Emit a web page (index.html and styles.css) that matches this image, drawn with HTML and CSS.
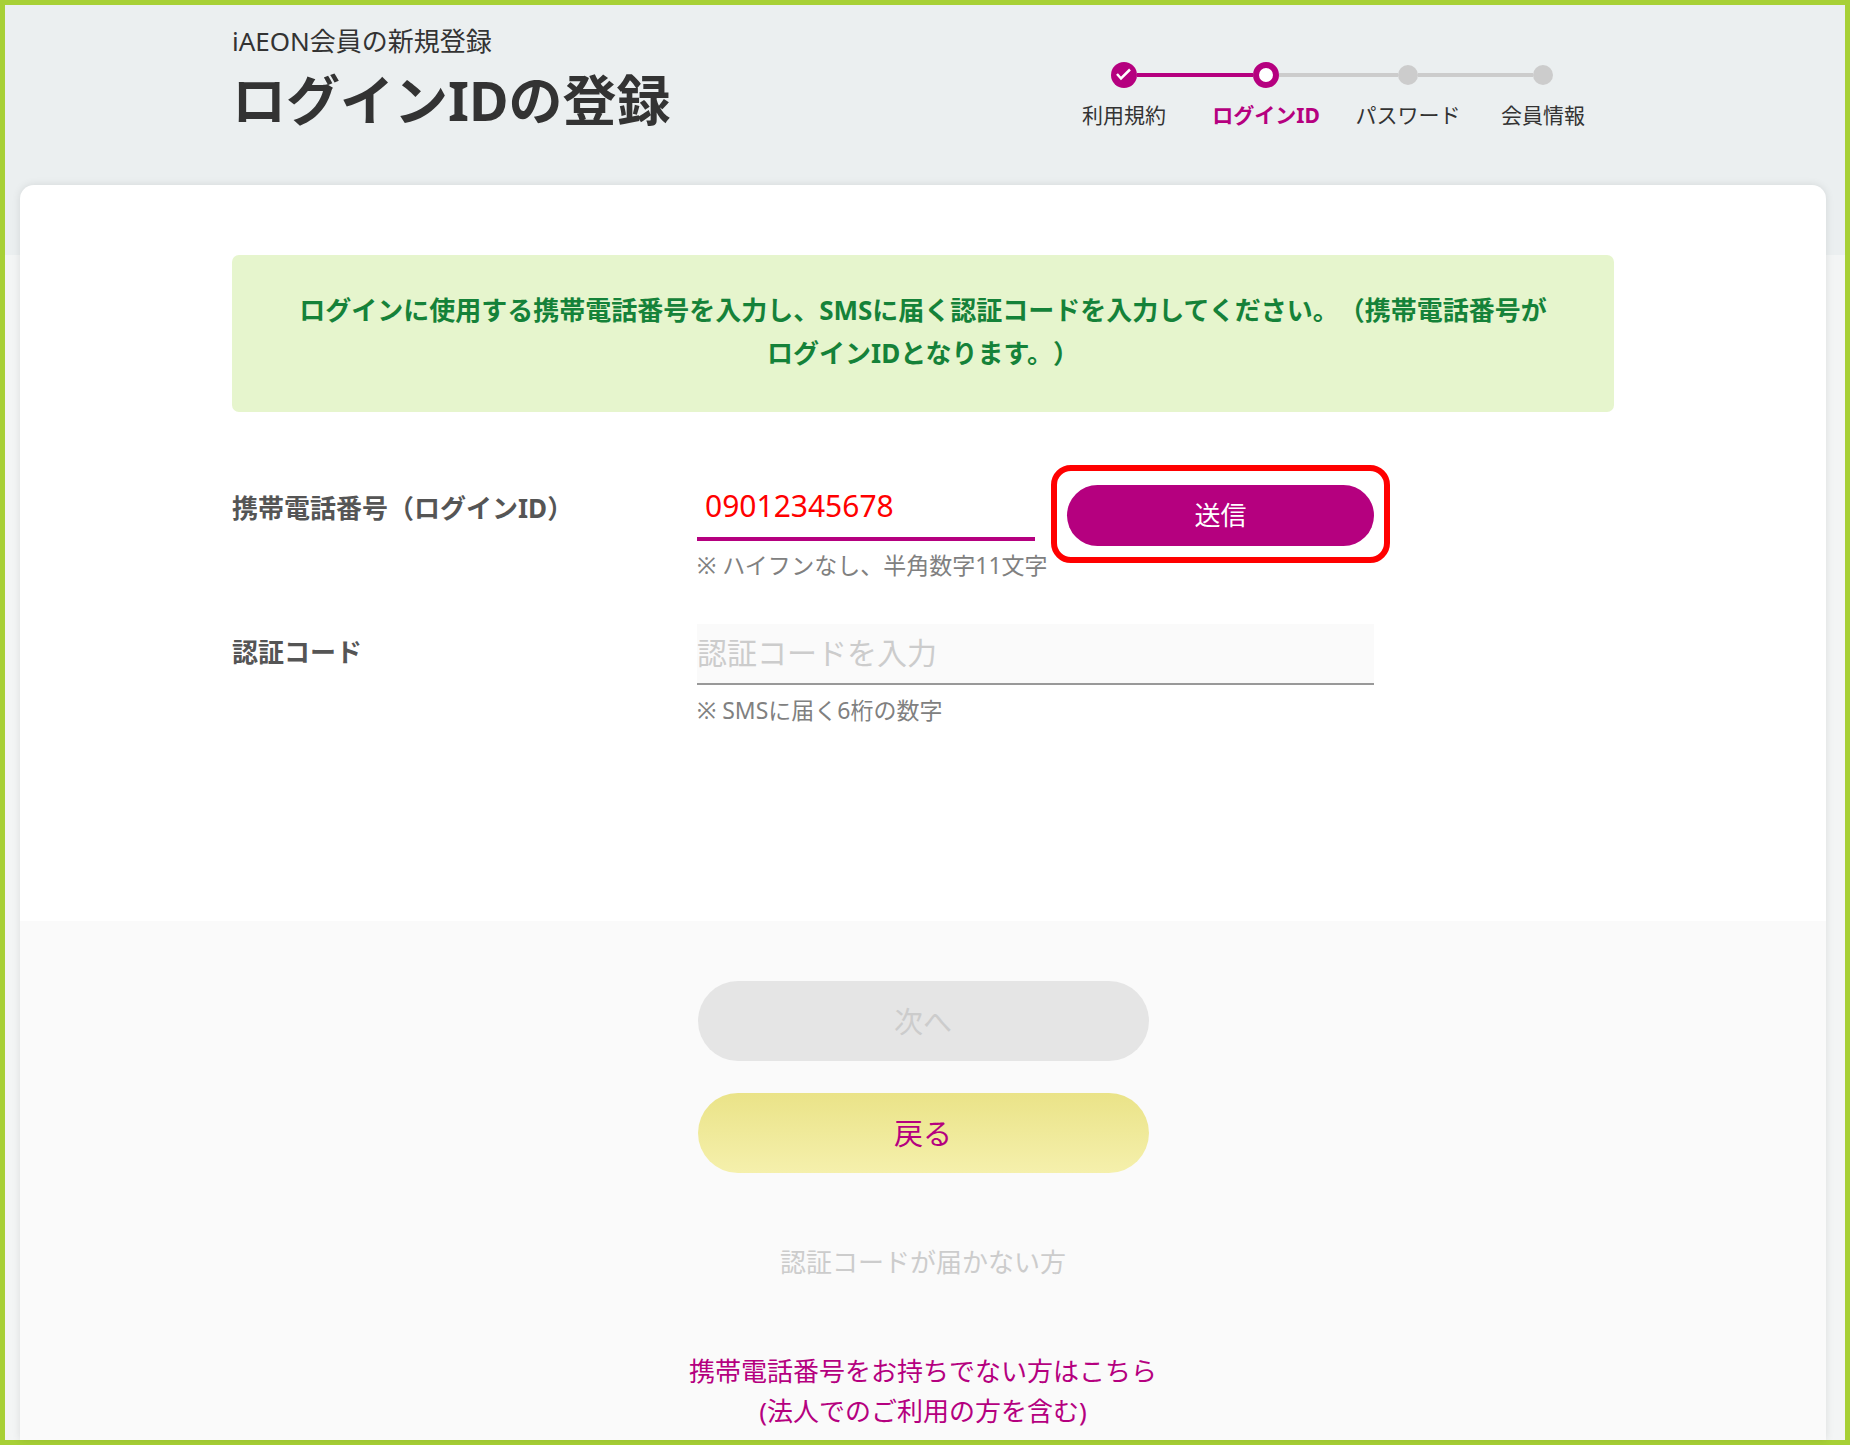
FILE: index.html
```html
<!DOCTYPE html>
<html lang="ja">
<head>
  <meta charset="UTF-8">
  <meta name="viewport" content="width=device-width, initial-scale=1.0">
  <title>ログインIDの登録</title>
  <link rel="stylesheet" href="styles.css">
</head>
<body>
  <div class="page">
    <header class="header">
      <div class="header-title">
        <p class="subtitle">iAEON会員の新規登録</p>
        <h1>ログインIDの登録</h1>
      </div>
      <ol class="steps">
        <li class="step">
          <div class="track">
            <span class="line none"></span>
            <svg class="dot-done" viewBox="0 0 26 26">
              <circle cx="13" cy="13" r="13" fill="#b5007f"/>
              <path d="M6 12l4 4.500L19 7.500" fill="none" stroke="#fff" stroke-width="2.500"/>
            </svg>
            <span class="line done"></span>
          </div>
          <span class="step-name">利用規約</span>
        </li>
        <li class="step current">
          <div class="track">
            <span class="line done"></span>
            <span class="dot-current"></span>
            <span class="line"></span>
          </div>
          <span class="step-name">ログインID</span>
        </li>
        <li class="step">
          <div class="track">
            <span class="line"></span>
            <span class="dot"></span>
            <span class="line"></span>
          </div>
          <span class="step-name">パスワード</span>
        </li>
        <li class="step">
          <div class="track">
            <span class="line"></span>
            <span class="dot"></span>
            <span class="line none"></span>
          </div>
          <span class="step-name">会員情報</span>
        </li>
      </ol>
    </header>

    <main class="card">
      <div class="card-body">
        <p class="notice">ログインに使用する携帯電話番号を入力し、SMSに届く認証コードを入力してください。（携帯電話番号がログインIDとなります。）</p>
        <form class="form" id="login-form">
          <div class="row">
            <label for="phone">携帯電話番号（ログインID）</label>
            <div class="field">
              <div class="phone-row">
                <input type="tel" id="phone" class="input phone" value="09012345678">
                <div class="send-wrap">
                  <button type="button" class="send">送信</button>
                </div>
              </div>
              <p class="hint">※ ハイフンなし、半角数字11文字</p>
            </div>
          </div>
          <div class="row">
            <label for="code">認証コード</label>
            <div class="field">
              <input type="text" id="code" class="input code" placeholder="認証コードを入力" disabled>
              <p class="hint">※ SMSに届く6桁の数字</p>
            </div>
          </div>
        </form>
      </div>

      <div class="actions">
        <button type="submit" form="login-form" class="btn next" disabled>次へ</button>
        <button type="button" class="btn back">戻る</button>
        <button type="button" class="resend" disabled>認証コードが届かない方</button>
        <a href="#" class="no-phone">携帯電話番号をお持ちでない方はこちら<br>(法人でのご利用の方を含む)</a>
      </div>
    </main>
  </div>
</body>
</html>
```
FILE: styles.css
```css
* {
  box-sizing: border-box;
}
body {
  margin: 0;
  font-family: "Noto Sans", "Noto Sans CJK JP", sans-serif;
  font-size: 26px;
  line-height: 40px;
  color: #333;
  text-spacing-trim: space-all;
}
h1, p, ol {
  margin: 0;
  padding: 0;
}
button, input {
  font-family: inherit;
  border: none;
}
.page {
  display: flex;
  flex-direction: column;
  min-height: 100vh;
  border: 5px solid #a7d036;
  background: linear-gradient(#ebeff0 250px, #f3f5f5 250px);
}

/* Header */
.header {
  display: flex;
  justify-content: space-between;
  width: 100%;
  max-width: 1386px;
  margin: 0 auto;
  padding: 16px 4px 46px 0;
}
.subtitle {
  line-height: 40px;
}
h1 {
  font-size: 54px;
  line-height: 78px;
}
.steps {
  display: grid;
  grid-template-columns: 142px 142px 142px 128px;
  align-self: flex-start;
  padding: 41px 7px 0 0;
  list-style: none;
}
.step {
  text-align: center;
}
.track {
  display: flex;
  align-items: center;
  height: 26px;
}
.line {
  flex: 1;
  height: 4px;
  background: #ccc;
}
.line.done {
  background: #b5007f;
}
.line.none {
  background: none;
}
.dot {
  width: 20px;
  height: 20px;
  border-radius: 50%;
  background: #ccc;
}
.dot-done {
  width: 26px;
  height: 26px;
}
.dot-current {
  width: 26px;
  height: 26px;
  border: 6px solid #b5007f;
  border-radius: 50%;
  background: #fff;
}
.step-name {
  display: block;
  margin-top: 12px;
  font-size: 21px;
  line-height: 30px;
}
.current .step-name {
  font-weight: bold;
  color: #b5007f;
}

/* Card */
.card {
  display: flex;
  flex-direction: column;
  flex: 1;
  margin: 0 19px 0 15px;
  border-radius: 14px 14px 0 0;
  background: #fff;
  box-shadow: 0 0 8px rgba(0, 0, 0, 0.1);
}
.card-body {
  width: 100%;
  max-width: 1382px;
  margin: 0 auto;
  padding: 70px 0 194px;
}
.notice {
  padding: 34px 56px 37px;
  border-radius: 7px;
  background: #e6f5cd;
  color: #158239;
  font-weight: bold;
  line-height: 43px;
  text-align: center;
}
.form {
  display: grid;
  gap: 42px;
  margin-top: 68px;
}
.row {
  display: grid;
  grid-template-columns: 465px minmax(0, 677px);
}
.row label {
  padding-top: 8px;
  font-weight: bold;
  color: #555;
}
.phone-row {
  display: grid;
  grid-template-columns: 11fr 10fr;
  gap: 32px;
}
.input {
  display: block;
  width: 100%;
  height: 61px;
  font-size: 30px;
  outline: none;
}
.phone {
  padding: 0 8px 6px;
  border-bottom: 4px solid #b5007f;
  background: #fff;
  color: #f00;
}
.code {
  padding: 0 0 2px;
  border-bottom: 2px solid #999;
  background: #fafafa;
}
.code::placeholder {
  color: #ccc;
}
.send-wrap {
  position: relative;
  margin-top: 5px;
}
/* red frame that marks the button to press */
.send-wrap::after {
  content: "";
  position: absolute;
  inset: -20px -16px -17px;
  border: 6px solid #f00;
  border-radius: 20px;
  pointer-events: none;
}
.send {
  display: block;
  width: 100%;
  height: 61px;
  padding: 0 0 3px;
  border-radius: 31px;
  background: #b5007f;
  color: #fff;
  font-size: 26px;
  cursor: pointer;
}
.hint {
  font-size: 23px;
  line-height: 34px;
  color: #808080;
  white-space: nowrap;
}
.phone-row + .hint {
  margin-top: 2px;
}
.code + .hint {
  margin-top: 8px;
}

/* Buttons */
.actions {
  display: flex;
  flex-direction: column;
  align-items: center;
  flex: 1;
  padding: 60px 0 7px;
  background: #fafafa;
}
.btn {
  width: 100%;
  max-width: 451px;
  height: 80px;
  padding: 0 0 3px;
  border-radius: 40px;
  font-size: 29px;
}
.next {
  margin-bottom: 32px;
  background: #e5e5e5;
  color: #ccc;
}
.back {
  background: linear-gradient(#eae388, #f5f0ac);
  color: #b5007f;
  cursor: pointer;
}
.resend {
  margin: 69px 0;
  padding: 0;
  background: none;
  color: #ccc;
  font-size: 26px;
  line-height: 40px;
}
.no-phone {
  color: #b5007f;
  text-align: center;
  text-decoration: none;
}
```
